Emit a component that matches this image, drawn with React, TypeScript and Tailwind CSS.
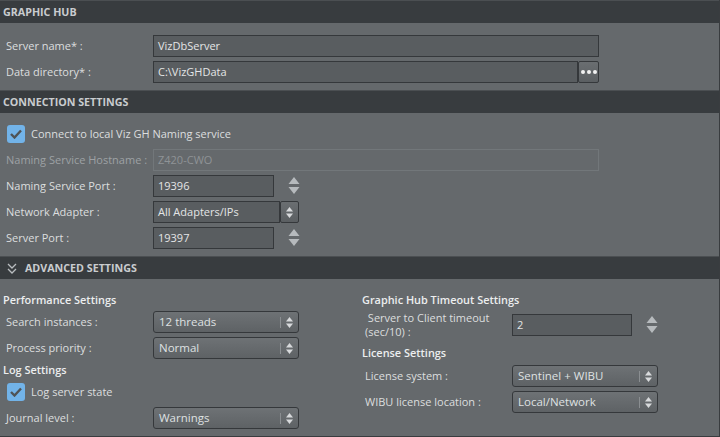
import React from "react";

const font = { fontFamily: '"Open Sans", "Noto Sans", sans-serif' };

function Header({ title, chevron }: { title: string; chevron?: boolean }) {
  return (
    <div className="h-[23px] border-t border-[#4b4f52] bg-[#383c3f] flex items-center px-[3px] gap-[8px]">
      {chevron && (
        <svg width="10" height="11" viewBox="0 0 10 11" className="ml-[4px]">
          <path d="M1 1 L5 5 L9 1 M1 6 L5 10 L9 6" fill="none" stroke="#b9bdc0" strokeWidth="1.3" />
        </svg>
      )}
      <span className="text-[10.7px] font-bold text-[#c9cccf]">{title}</span>
    </div>
  );
}

function Label({ children, disabled }: { children: React.ReactNode; disabled?: boolean }) {
  return (
    <span className={"whitespace-nowrap " + (disabled ? "text-[#9da1a4]" : "text-[#dcdedf]")}>
      {children}
    </span>
  );
}

function TextBox({ value, w, disabled }: { value: string; w: string; disabled?: boolean }) {
  return (
    <div
      className={
        "h-[22px] flex items-center px-[4px] border " +
        w +
        (disabled ? " border-[#72777a] text-[#8f9396]" : " bg-[#595d60] border-[#35383b] text-[#e4e5e6]")
      }
    >
      {value}
    </div>
  );
}

function Spin() {
  return (
    <svg width="12" height="18" viewBox="0 0 12 18" className="ml-[14px]">
      <path d="M6 0 L11.5 7 L0.5 7 Z" fill="#b6babd" />
      <path d="M0.5 10 L11.5 10 L6 17 Z" fill="#b6babd" />
    </svg>
  );
}

function SmallArrows() {
  return (
    <svg width="7" height="11" viewBox="0 0 7 11">
      <path d="M3.5 0 L7 4.5 L0 4.5 Z" fill="#d8dadc" />
      <path d="M0 6.5 L7 6.5 L3.5 11 Z" fill="#d8dadc" />
    </svg>
  );
}

function Combo({ value }: { value: string }) {
  return (
    <div className="w-[146px] h-[22px] flex items-center border border-[#35383b] rounded-[3px] bg-gradient-to-b from-[#6e7275] to-[#5e6265] text-[#dfe1e2] text-[11.5px]">
      <span className="flex-1 pl-[5px]">{value}</span>
      <span className="w-px h-[11px] bg-[#8a8e91] mr-[5px]" />
      <span className="w-[12px] flex items-center">
        <SmallArrows />
      </span>
    </div>
  );
}

function Check({ label }: { label: string }) {
  return (
    <div className="h-[18px] flex items-center gap-[6px] pl-[7px]">
      <div className="w-[18px] h-[18px] rounded-[3px] bg-[#72b3e8] flex items-center justify-center">
        <svg width="12" height="10" viewBox="0 0 12 10">
          <path d="M1 5 L4.5 8.5 L11 1.5" fill="none" stroke="#4f5356" strokeWidth="2.4" />
        </svg>
      </div>
      <span className="text-[#dcdedf]">{label}</span>
    </div>
  );
}

function Row({ label, children, disabled }: { label: React.ReactNode; children: React.ReactNode; disabled?: boolean }) {
  return (
    <div className="h-[22px] flex items-center">
      <div className="w-[147px] shrink-0">
        <Label disabled={disabled}>{label}</Label>
      </div>
      {children}
    </div>
  );
}

function Heading({ children, cls }: { children: React.ReactNode; cls: string }) {
  return <span className={"text-[10.9px] font-semibold text-[#eceeef] flex items-center " + cls}>{children}</span>;
}

export default function App() {
  return (
    <div style={font} className="w-[720px] h-[437px] bg-[#65696c] border-r border-b border-[#393c3f] overflow-hidden text-[11px] leading-[14px]">
      <Header title="GRAPHIC HUB" />
      <div className="pt-[12px] pb-[7px] pl-[6px] flex flex-col gap-[4px]">
        <Row label="Server name* :">
          <TextBox value="VizDbServer" w="w-[446px]" />
        </Row>
        <Row label="Data directory* :">
          <TextBox value="C:\VizGHData" w="w-[425px]" />
          <div className="w-[21px] h-[22px] border border-[#35383b] rounded-[2px] bg-gradient-to-b from-[#6a6e71] to-[#5b5f62] flex items-center justify-center gap-[2px]">
            <span className="w-[4px] h-[4px] rounded-full bg-[#f2f2f2]" />
            <span className="w-[4px] h-[4px] rounded-full bg-[#f2f2f2]" />
            <span className="w-[4px] h-[4px] rounded-full bg-[#f2f2f2]" />
          </div>
        </Row>
      </div>
      <Header title="CONNECTION SETTINGS" />
      <div className="pt-[12px] pb-[7px] flex flex-col">
        <Check label="Connect to local Viz GH Naming service" />
        <div className="pl-[6px] pt-[6px] flex flex-col gap-[4px]">
          <Row label="Naming Service Hostname :" disabled>
            <TextBox value="Z420-CWO" w="w-[446px]" disabled />
          </Row>
          <Row label="Naming Service Port :">
            <TextBox value="19396" w="w-[121px]" />
            <Spin />
          </Row>
          <Row label="Network Adapter :">
            <TextBox value="All Adapters/IPs" w="w-[127px]" />
            <div className="w-[19px] h-[22px] border border-[#35383b] rounded-[2px] bg-gradient-to-b from-[#6a6e71] to-[#5b5f62] flex items-center justify-center">
              <SmallArrows />
            </div>
          </Row>
          <Row label="Server Port :">
            <TextBox value="19397" w="w-[121px]" />
            <Spin />
          </Row>
        </div>
      </div>
      <Header title="ADVANCED SETTINGS" chevron />
      <div className="flex pt-[12px]">
        <div className="w-[359px] pl-[3px] flex flex-col">
          <Heading cls="h-[18px]">Performance Settings</Heading>
          <div className="pl-[3px] pt-[2px] flex flex-col gap-[4px]">
            <Row label="Search instances :">
              <Combo value="12 threads" />
            </Row>
            <Row label="Process priority :">
              <Combo value="Normal" />
            </Row>
          </div>
          <Heading cls="mt-[1px] h-[20px]">Log Settings</Heading>
          <div className="pt-[3px] -ml-[3px]">
            <Check label="Log server state" />
          </div>
          <div className="pl-[3px] pt-[6px]">
            <Row label="Journal level :">
              <Combo value="Warnings" />
            </Row>
          </div>
        </div>
        <div className="flex-1 pl-[3px] flex flex-col">
          <Heading cls="h-[18px]">Graphic Hub Timeout Settings</Heading>
          <div className="pl-[3px] flex items-center h-[32px]">
            <div className="w-[147px] shrink-0">
              <Label>
                &nbsp;Server to Client timeout
                <br />
                (sec/10) :
              </Label>
            </div>
            <TextBox value="2" w="w-[120px]" />
            <Spin />
          </div>
          <Heading cls="mt-[2px] h-[20px]">License Settings</Heading>
          <div className="pl-[3px] pt-[2px] flex flex-col gap-[4px]">
            <Row label="License system :">
              <Combo value="Sentinel + WIBU" />
            </Row>
            <Row label="WIBU license location :">
              <Combo value="Local/Network" />
            </Row>
          </div>
        </div>
      </div>
    </div>
  );
}
